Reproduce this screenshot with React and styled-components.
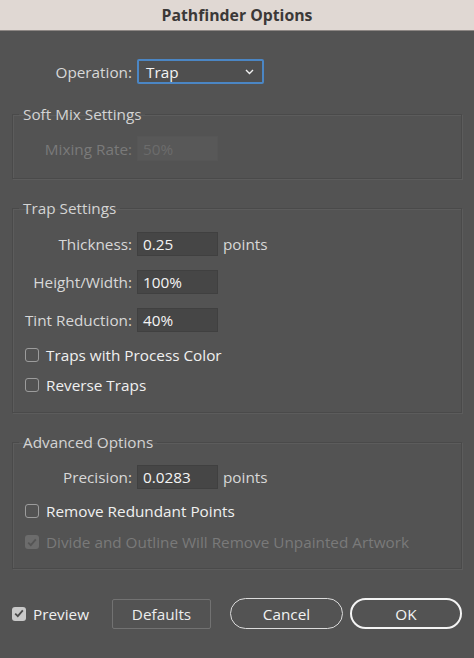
import React from 'react';
import styled, { createGlobalStyle } from 'styled-components';

const GlobalStyle = createGlobalStyle`
  html, body {
    margin: 0;
    padding: 0;
    background: #535353;
  }
  body {
    font-family: "Open Sans", "Liberation Sans", sans-serif;
    font-size: 15.3px;
    color: #e6e6e6;
    -webkit-font-smoothing: antialiased;
  }
`;

const Dialog = styled.div`
  width: 474px;
  height: 658px;
  background: #535353;
  overflow: hidden;
`;

const TitleBar = styled.div`
  height: 30px;
  background: #e0d8d3;
  border-bottom: 1px solid #8d8784;
  display: flex;
  align-items: center;
  justify-content: center;
  font-weight: 700;
  font-size: 15.8px;
  color: #3b3838;
`;

const Body = styled.div`
  padding: 0 12px;
  display: flex;
  flex-direction: column;
`;

const Row = styled.div`
  display: flex;
  align-items: center;
  height: ${p => p.$h || 24}px;
  margin-top: ${p => p.$mt || 0}px;
`;

const Label = styled.label`
  width: 119px;
  padding-right: 5px;
  text-align: right;
  white-space: nowrap;
  color: ${p => (p.$disabled ? '#7a7a7a' : '#d8d8d8')};
`;

const Select = styled.div`
  box-sizing: border-box;
  width: 127px;
  height: 25px;
  border: 2px solid #4b86c4;
  border-radius: 2px;
  background: #4f4f4f;
  display: flex;
  align-items: center;
  justify-content: space-between;
  padding: 0 8px 0 7px;
  color: #f4f4f4;
`;

const Input = styled.div`
  box-sizing: border-box;
  width: 81px;
  height: ${p => p.$h || 24}px;
  background: ${p => (p.$disabled ? '#585858' : '#464646')};
  border: 1px solid ${p => (p.$disabled ? '#565656' : '#404040')};
  display: flex;
  align-items: center;
  padding-left: 5px;
  color: ${p => (p.$disabled ? '#6c6c6c' : '#f4f4f4')};
`;

const Unit = styled.span`
  margin-left: 5px;
  color: #d8d8d8;
`;

const Group = styled.fieldset`
  margin: ${p => p.$mt || 0}px 0 0;
  padding: 0 0 ${p => p.$pb || 16}px;
  border: 1px solid #4a4a4a;
  box-shadow: 1px 1px 0 #5c5c5c, inset 1px 1px 0 #5c5c5c;
  min-width: 0;
`;

const Legend = styled.legend`
  margin-left: 6px;
  padding: 0 4px;
  line-height: 18px;
  color: #d4d4d4;
`;

const CheckRow = styled.label`
  display: flex;
  align-items: center;
  height: 20px;
  margin-top: ${p => p.$mt || 0}px;
  padding-left: ${p => (p.$pl === undefined ? 12 : p.$pl)}px;
  white-space: nowrap;
  color: ${p => (p.$disabled ? '#7a7a7a' : '#f0f0f0')};
`;

const Box = styled.span`
  box-sizing: border-box;
  width: 14px;
  height: 14px;
  border-radius: 3px;
  margin-right: 7px;
  flex-shrink: 0;
  display: flex;
  align-items: center;
  justify-content: center;
  border: 1px solid ${p => (p.$checked ? 'transparent' : '#9c9c9c')};
  background: ${p => (!p.$checked ? 'transparent' : p.$disabled ? '#6c6c6c' : '#c9c9c9')};
`;

const Footer = styled.div`
  display: flex;
  align-items: center;
  margin-top: 29px;
  height: 31px;
`;

const Defaults = styled.button`
  box-sizing: border-box;
  margin-left: ${p => p.$ml}px;
  width: 99px;
  height: 30px;
  background: transparent;
  border: 1px solid #727272;
  border-radius: 2px;
  color: #ececec;
  font: inherit;
`;

const Pill = styled.button`
  box-sizing: border-box;
  margin-left: ${p => p.$ml}px;
  width: ${p => p.$w}px;
  height: 31px;
  background: transparent;
  border: ${p => (p.$primary ? '2px solid #f4f4f4' : '1.5px solid #dcdcdc')};
  border-radius: 16px;
  color: #f2f2f2;
  font: inherit;
`;

const Chevron = () => (
  <svg width="9" height="6" viewBox="0 0 9 6">
    <path d="M1 1l3.5 3.5L8 1" fill="none" stroke="#f0f0f0" strokeWidth="1.4" />
  </svg>
);

const Check = ({ color }) => (
  <svg width="10" height="9" viewBox="0 0 10 9">
    <path d="M1.2 4.6l2.6 2.6L8.8 1.4" fill="none" stroke={color} strokeWidth="1.8" />
  </svg>
);

const Checkbox = ({ checked, disabled, children, ...rest }) => (
  <CheckRow $disabled={disabled} {...rest}>
    <Box $checked={checked} $disabled={disabled}>
      {checked && <Check color={disabled ? '#555' : '#4a4a4a'} />}
    </Box>
    {children}
  </CheckRow>
);

const App = () => {
  return (
    <Dialog>
      <GlobalStyle />
      <TitleBar>Pathfinder Options</TitleBar>
      <Body>
        <Row $mt={28} $h={25} style={{ paddingLeft: 1 }}>
          <Label>Operation:</Label>
          <Select>
            Trap
            <Chevron />
          </Select>
        </Row>

        <Group $mt={21} $pb={17}>
          <Legend>Soft Mix Settings</Legend>
          <Row $mt={13} $h={25}>
            <Label $disabled>Mixing Rate:</Label>
            <Input $disabled $h={25}>50%</Input>
          </Row>
        </Group>

        <Group $mt={20} $pb={17}>
          <Legend>Trap Settings</Legend>
          <Row $mt={15}>
            <Label>Thickness:</Label>
            <Input>0.25</Input>
            <Unit>points</Unit>
          </Row>
          <Row $mt={14}>
            <Label>Height/Width:</Label>
            <Input>100%</Input>
          </Row>
          <Row $mt={14}>
            <Label>Tint Reduction:</Label>
            <Input>40%</Input>
          </Row>
          <Checkbox $mt={13}>Traps with Process Color</Checkbox>
          <Checkbox $mt={10}>Reverse Traps</Checkbox>
        </Group>

        <Group $mt={20} $pb={16}>
          <Legend>Advanced Options</Legend>
          <Row $mt={14}>
            <Label>Precision:</Label>
            <Input>0.0283</Input>
            <Unit>points</Unit>
          </Row>
          <Checkbox $mt={12}>Remove Redundant Points</Checkbox>
          <Checkbox $mt={11} checked disabled>
            Divide and Outline Will Remove Unpainted Artwork
          </Checkbox>
        </Group>

        <Footer>
          <Checkbox checked $pl={0}>Preview</Checkbox>
          <Defaults $ml={23}>Defaults</Defaults>
          <Pill $ml={19} $w={113}>Cancel</Pill>
          <Pill $ml={7} $w={112} $primary>OK</Pill>
        </Footer>
      </Body>
    </Dialog>
  );
};

export default App;
